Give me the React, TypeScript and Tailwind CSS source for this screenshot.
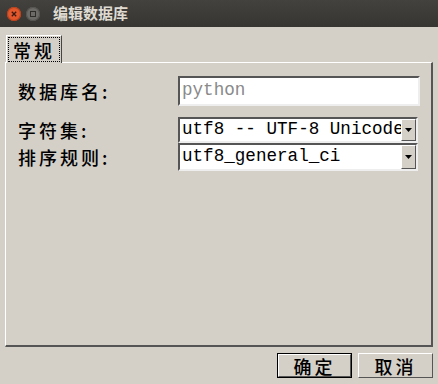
import React from "react";

const cjk = { fontFamily: '"Noto Sans CJK SC", "Noto Sans", sans-serif' };
const mono = { fontFamily: '"Liberation Mono", "DejaVu Sans Mono", monospace' };

function Arrow() {
  return (
    <div className="flex h-full w-[15px] shrink-0 items-center justify-center border border-t-white border-l-white border-r-[#555] border-b-[#555] bg-[#d4d0c8]">
      <svg width="7" height="4" viewBox="0 0 7 4">
        <polygon points="0,0 7,0 3.5,4" fill="#000" />
      </svg>
    </div>
  );
}

function Combo({ text, h }: { text: string; h: string }) {
  return (
    <div className={`flex w-[240px] ${h} items-stretch border-2 border-t-[#555] border-l-[#555] border-r-[#eee] border-b-[#eee] bg-white`}>
      <div className="flex min-w-0 flex-1 items-center overflow-hidden whitespace-nowrap pl-[2px] text-[17.6px] leading-none text-black" style={mono}>
        {text}
      </div>
      <Arrow />
    </div>
  );
}

export default function App() {
  return (
    <div className="flex h-[384px] w-[438px] flex-col bg-[#d4d0c8]">
      {/* title bar */}
      <div className="flex h-[27px] items-center bg-gradient-to-b from-[#43423e] to-[#363531] pl-[7px]">
        <div className="flex h-[14px] w-[14px] items-center justify-center rounded-full bg-[#e2572c] shadow-[inset_0_0_0_1px_#b8411c]">
          <svg width="6" height="6" viewBox="0 0 6 6">
            <path d="M0.8 0.8 L5.2 5.2 M5.2 0.8 L0.8 5.2" stroke="#3a1a10" strokeWidth="1.3" />
          </svg>
        </div>
        <div className="ml-[5px] flex h-[14px] w-[14px] items-center justify-center rounded-full bg-[#6c6b67] shadow-[inset_0_0_0_1px_#555450]">
          <div className="h-[6px] w-[6px] border border-[#2e2d2a]" />
        </div>
        <div className="ml-[13px] text-[15px] font-bold text-[#dfdbd2]" style={cjk}>
          编辑数据库
        </div>
      </div>

      {/* tabs */}
      <div className="mt-[8px] flex pl-[6px]">
        <div className="relative z-10 -mb-[1px] flex h-[28px] w-[56px] items-stretch border-l border-t border-r border-l-white border-t-white border-r-[#444] bg-[#d4d0c8] p-[1px]">
          <div className="flex flex-1 items-center justify-center border border-dotted border-black text-[18px] font-medium leading-none tracking-[3px] text-black" style={cjk}>
            常规
          </div>
        </div>
      </div>

      {/* panel */}
      <div className="mx-[5px] flex h-[285px] flex-col border-t border-l border-r-2 border-b-2 border-t-white border-l-white border-r-[#555] border-b-[#555] pl-[12px] pt-[13px]">
        <div className="flex h-[30px] items-center">
          <div className="w-[160px] text-[18px] font-medium leading-none tracking-[3px] text-black" style={cjk}>
            数据库名:
          </div>
          <div className="flex h-[30px] w-[242px] items-center border-2 border-t-[#555] border-l-[#555] border-r-[#eee] border-b-[#eee] bg-white pl-[2px] text-[17.6px] leading-none text-[#8a8a8a]" style={mono}>
            python
          </div>
        </div>
        <div className="mt-[11px] flex h-[26px] items-center">
          <div className="w-[160px] text-[18px] font-medium leading-none tracking-[3px] text-black" style={cjk}>
            字符集:
          </div>
          <Combo text="utf8 -- UTF-8 Unicode" h="h-[26px]" />
        </div>
        <div className="flex h-[28px] items-center">
          <div className="w-[160px] text-[18px] font-medium leading-none tracking-[3px] text-black" style={cjk}>
            排序规则:
          </div>
          <Combo text="utf8_general_ci" h="h-[28px]" />
        </div>
      </div>

      {/* buttons */}
      <div className="mt-[6px] flex justify-end gap-[6px] pr-[5px]">
        <div className="flex h-[25px] w-[75px] items-stretch border border-black">
          <div className="flex flex-1 items-center justify-center border border-t-white border-l-white border-r-[#555] border-b-[#555] text-[18px] font-medium leading-none tracking-[3px] text-black" style={cjk}>
            确定
          </div>
        </div>
        <div className="flex h-[25px] w-[75px] items-center justify-center border border-t-white border-l-white border-r-[#555] border-b-[#555] text-[18px] font-medium leading-none tracking-[3px] text-black" style={cjk}>
          取消
        </div>
      </div>
    </div>
  );
}
